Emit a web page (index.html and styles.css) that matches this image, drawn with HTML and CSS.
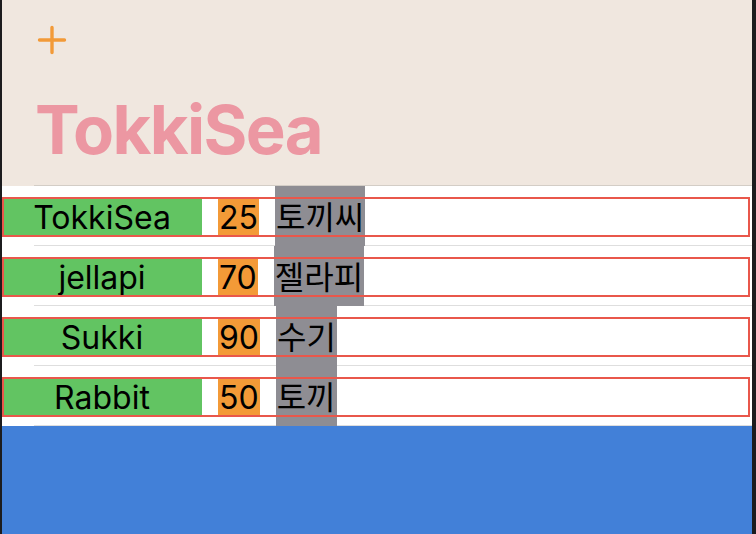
FILE: index.html
```html
<!DOCTYPE html>
<html lang="ko">
<head>
<meta charset="utf-8">
<title>TokkiSea</title>
<link rel="stylesheet" href="styles.css">
</head>
<body>
<div class="screen">
  <header class="header">
    <button class="add-btn" aria-label="추가">
      <svg width="30" height="30" viewBox="0 0 30 30"><path d="M2.5 15H27.5M15 2.5V27.5" stroke="#F29A38" stroke-width="3.4" stroke-linecap="round" fill="none"/></svg>
    </button>
    <h1 class="title">TokkiSea</h1>
  </header>
  <ul class="list">
    <li class="row"><span class="name">TokkiSea</span><span class="score">25</span><span class="kor">토끼씨</span></li>
    <li class="row"><span class="name">jellapi</span><span class="score">70</span><span class="kor">젤라피</span></li>
    <li class="row"><span class="name">Sukki</span><span class="score">90</span><span class="kor">수기</span></li>
    <li class="row"><span class="name">Rabbit</span><span class="score">50</span><span class="kor">토끼</span></li>
  </ul>
  <div class="footer"></div>
</div>
</body>
</html>
```
FILE: styles.css
```css
html, body {
  margin: 0;
  padding: 0;
  height: 100%;
  background: #1c1c1e;
}
body {
  font-family: Inter, "Noto Sans", "Noto Sans CJK KR", sans-serif;
  color: #000;
}
.screen {
  width: 750px;
  height: 534px;
  margin-left: 2px;
  background: #ffffff;
  display: flex;
  flex-direction: column;
  overflow: hidden;
}
.header {
  height: 186px;
  box-sizing: border-box;
  background-color: #F0E7DF;
  background-image: linear-gradient(#D3CDC6, #D3CDC6);
  background-repeat: no-repeat;
  background-size: calc(100% - 32px) 1px;
  background-position: 32px 185px;
  padding: 25px 0 0 33px;
  display: flex;
  flex-direction: column;
  align-items: flex-start;
}
.add-btn {
  border: 0;
  padding: 0;
  margin: 0 0 0 2px;
  background: none;
  width: 30px;
  height: 30px;
  display: block;
}
.add-btn svg { display: block; }
.title {
  margin: 35px 0 0 0;
  font-family: Inter, sans-serif;
  font-weight: 700;
  font-size: 67px;
  line-height: 80px;
  color: #EC97A2;
  letter-spacing: -1.6px;
}
.list {
  list-style: none;
  margin: 0;
  padding: 0;
}
.row {
  position: relative;
  height: 60px;
  display: flex;
  align-items: flex-start;
  gap: 16px;
  font-size: 32px;
  background-image: linear-gradient(#DEDEDE, #DEDEDE);
  background-repeat: no-repeat;
  background-size: calc(100% - 32px) 1px;
  background-position: 32px 59px;
}
.row::after {
  content: "";
  position: absolute;
  left: 0;
  right: 2px;
  top: 11px;
  height: 40px;
  box-sizing: border-box;
  border: 2px solid #E9574B;
  pointer-events: none;
}
.name {
  width: 200px;
  height: 38px;
  margin-top: 12px;
  background: #62C462;
  display: flex;
  align-items: center;
  justify-content: center;
}
.score {
  height: 39px;
  margin-top: 12px;
  padding: 0 1px;
  background: #F39A37;
  display: flex;
  align-items: center;
}
.kor {
  align-self: stretch;
  background: #8E8D93;
  display: flex;
  align-items: center;
  font-family: "Noto Sans CJK KR", sans-serif;
  font-size: 32px;
  padding: 0 1px 2px;
  box-sizing: border-box;
}
.footer {
  flex: 1;
  background: #4280D8;
}
```
